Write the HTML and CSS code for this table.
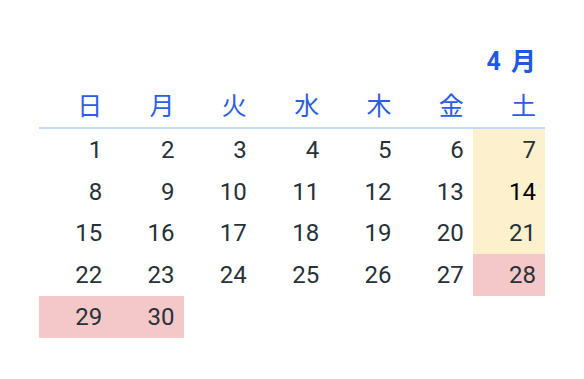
FILE: index.html
```html
<!DOCTYPE html>
<html lang="ja">
<head>
<meta charset="utf-8">
<link rel="stylesheet" href="styles.css">
</head>
<body>
<div class="cal">
  <div class="title">4 月</div>
  <div class="dow">
    <div>日</div><div>月</div><div>火</div><div>水</div><div>木</div><div>金</div><div>土</div>
  </div>
  <div class="days">
    <div>1</div><div>2</div><div>3</div><div>4</div><div>5</div><div>6</div><div class="sat">7</div>
    <div>8</div><div>9</div><div>10</div><div>11</div><div>12</div><div>13</div><div class="sat hover">14</div>
    <div>15</div><div>16</div><div>17</div><div>18</div><div>19</div><div>20</div><div class="sat">21</div>
    <div>22</div><div>23</div><div>24</div><div>25</div><div>26</div><div>27</div><div class="hol">28</div>
    <div class="hol">29</div><div class="hol">30</div>
  </div>
</div>
</body>
</html>
```
FILE: styles.css
```css
html, body {
  margin: 0;
  padding: 0;
  background: #ffffff;
}
body {
  font-family: Roboto, "Noto Sans CJK JP", sans-serif;
}
.cal {
  width: 506px;
  margin: 44px 0 0 39px;
}
.title {
  height: 36px;
  line-height: 36px;
  margin-bottom: 7px;
  text-align: right;
  padding-right: 9px;
  font-size: 25px;
  font-weight: 700;
  word-spacing: 4px;
  color: #1f57e6;
}
.dow {
  display: grid;
  grid-template-columns: repeat(7, 1fr);
  height: 40px;
  border-bottom: 2px solid #c2d9f7;
}
.dow div {
  text-align: right;
  padding-right: 9px;
  line-height: 40px;
  font-size: 25px;
  color: #2b5de6;
}
.days {
  display: grid;
  grid-template-columns: repeat(7, 1fr);
  grid-auto-rows: 41.8px;
}
.days div {
  display: flex;
  align-items: center;
  justify-content: flex-end;
  padding-right: 9px;
  font-size: 24px;
  color: #263238;
}
.days .sat {
  background: #fdf0cd;
}
.days .hover {
  color: #000000;
}
.days .hol {
  background: #f4c8c8;
}
```
